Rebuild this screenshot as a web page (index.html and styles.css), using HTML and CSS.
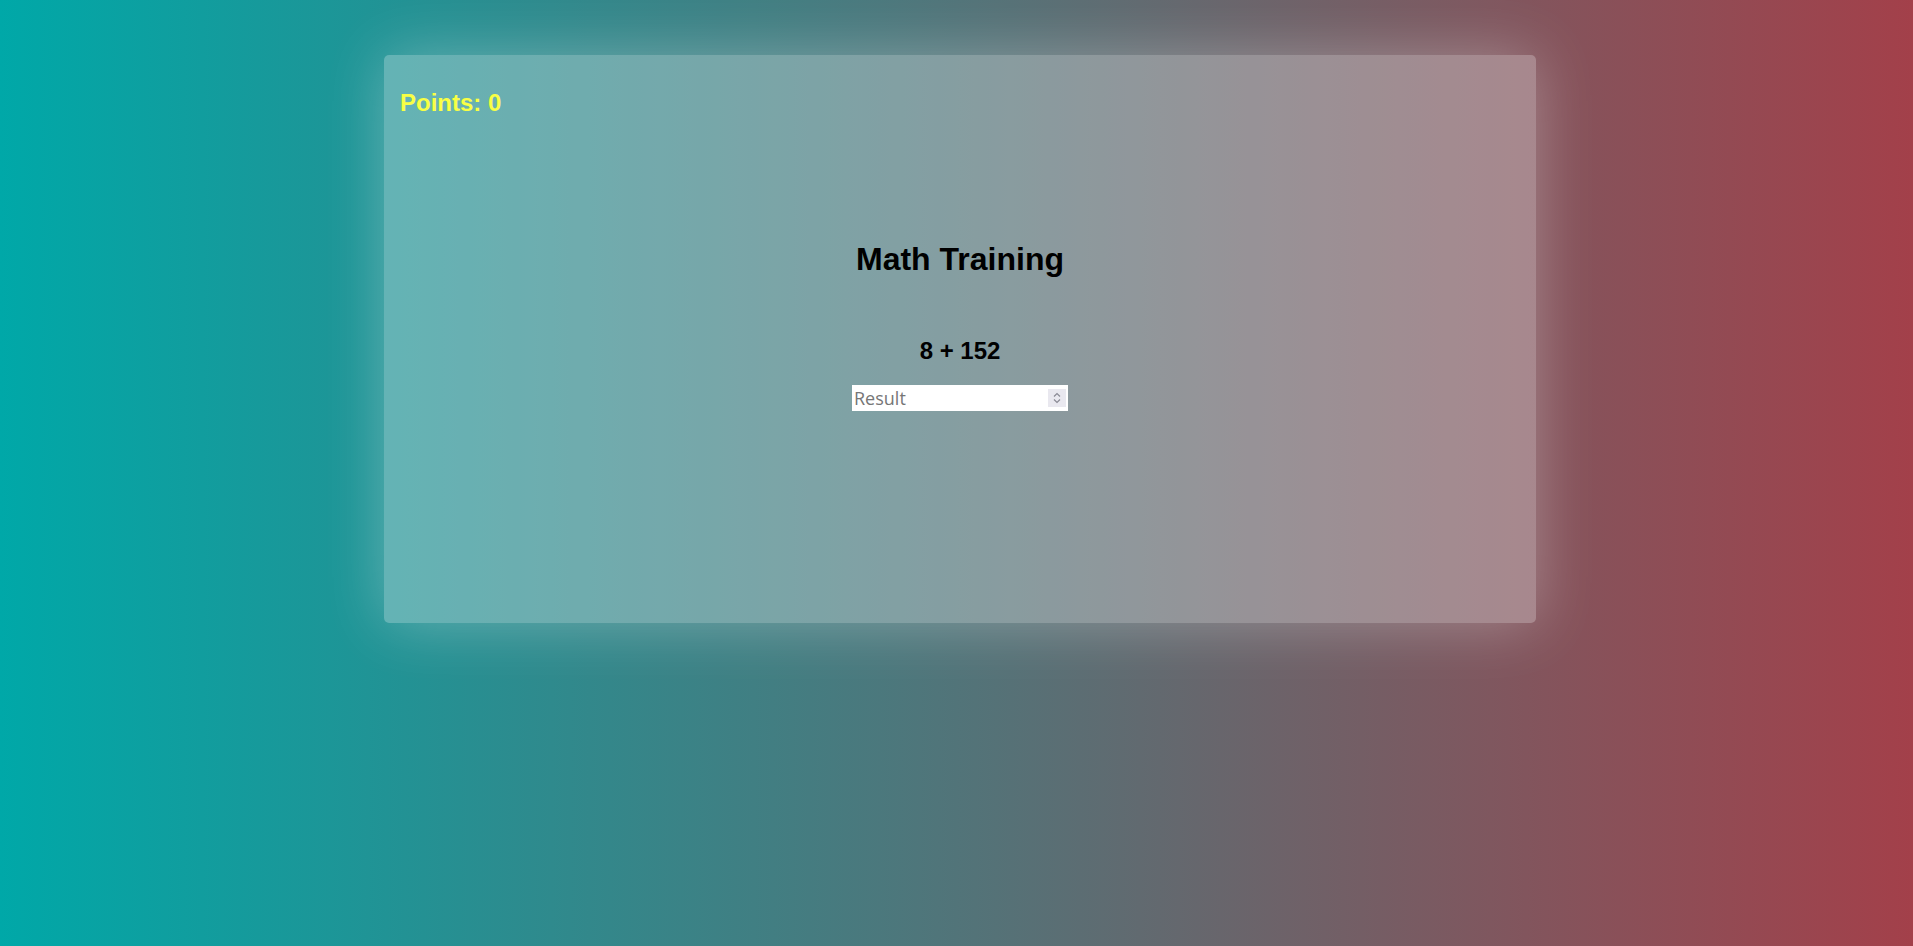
FILE: index.html
```html
<!DOCTYPE html>
<html lang="en">
<head>
<meta charset="utf-8">
<title>Math Training</title>
<link rel="stylesheet" href="styles.css">
</head>
<body>
<div class="page">
  <main class="card">
    <h2 class="points">Points: 0</h2>
    <h1 class="title">Math Training</h1>
    <h2 class="problem">8 + 152</h2>
    <div class="answer">
      <input class="answer-input" type="text" placeholder="Result">
      <span class="spinner">
        <svg width="10" height="14" viewBox="0 0 10 14" aria-hidden="true">
          <path d="M2 5.5 L5 2.5 L8 5.5" fill="none" stroke="#8a8a94" stroke-width="1.2"/>
          <path d="M2 8.5 L5 11.5 L8 8.5" fill="none" stroke="#8a8a94" stroke-width="1.2"/>
        </svg>
      </span>
    </div>
  </main>
</div>
</body>
</html>
```

FILE: styles.css
```css
html, body {
  margin: 0;
  padding: 0;
  height: 100%;
}

body {
  background: linear-gradient(to right, #00a8a8 0%, #a3404a 100%);
  font-family: "Liberation Sans", Arial, sans-serif;
  overflow: hidden;
}

.page {
  display: flex;
  justify-content: center;
  padding: 55px 0 0 7px;
}

.card {
  box-sizing: border-box;
  width: 1152px;
  height: 568px;
  padding: 34px 16px 0;
  background: rgba(255, 255, 255, 0.3);
  border-radius: 5px;
  box-shadow: 0 0 60px rgba(255, 255, 255, 0.3);
  display: flex;
  flex-direction: column;
  align-items: center;
}

.points {
  align-self: flex-start;
  margin: 0;
  font-size: 24px;
  line-height: 28px;
  font-weight: bold;
  color: #f8ff44;
}

.title {
  margin: 124px 0 0;
  font-size: 32px;
  line-height: 36px;
  font-weight: bold;
  color: #000;
}

.problem {
  margin: 60px 0 0;
  font-size: 24px;
  line-height: 28px;
  font-weight: bold;
  color: #000;
}

.answer {
  margin-top: 20px;
  width: 216px;
  height: 26px;
  background: #fff;
  display: flex;
  align-items: center;
  box-sizing: border-box;
  padding: 0 2px 0 0;
}

.answer-input {
  flex: 1;
  min-width: 0;
  border: none;
  outline: none;
  background: transparent;
  padding: 0 0 0 2px;
  height: 26px;
  font-family: "Open Sans", "Noto Sans", sans-serif;
  font-size: 18px;
  color: #333;
}

.answer-input::placeholder {
  color: #767676;
}

.spinner {
  width: 18px;
  height: 18px;
  background: #e9e8ef;
  display: flex;
  align-items: center;
  justify-content: center;
  margin-right: 0;
}
```
